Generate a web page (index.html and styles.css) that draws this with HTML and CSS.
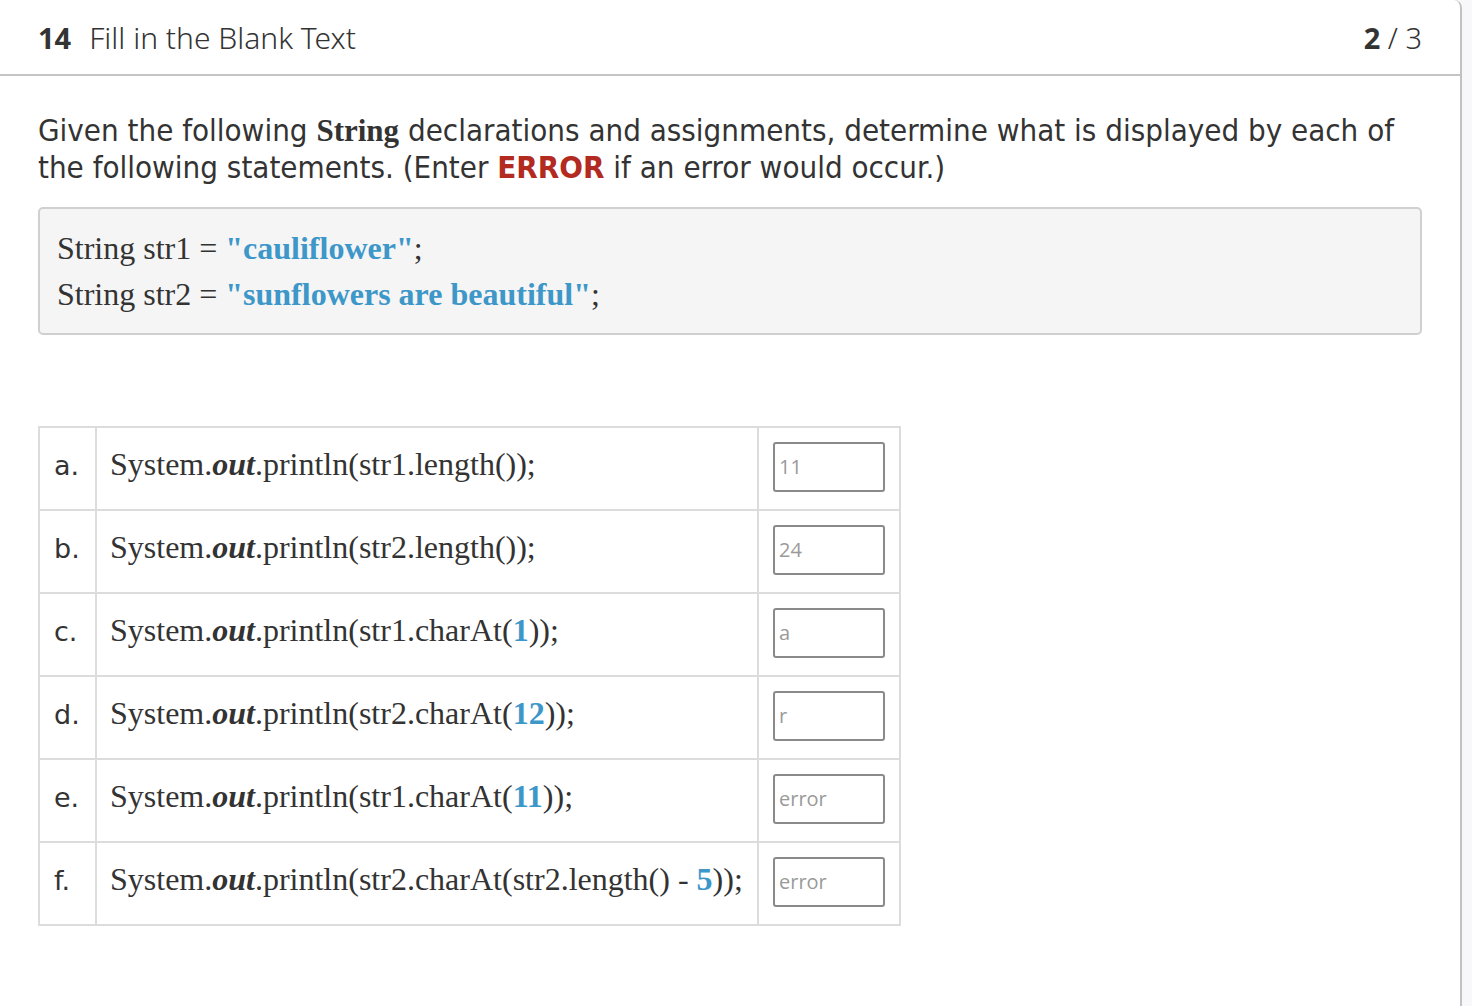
FILE: index.html
```html
<!DOCTYPE html>
<html>
<head>
<meta charset="utf-8">
<link rel="stylesheet" href="styles.css">
</head>
<body>
<div class="page">
  <div class="card">
    <header class="head">
      <div class="title"><span class="num">14</span><span class="name">Fill in the Blank Text</span></div>
      <div class="pager"><b>2</b> / 3</div>
    </header>
    <div class="body">
      <p class="prompt">Given the following <span class="kw">String</span> declarations and assignments, determine what is displayed by each of the following statements. (Enter <span class="err">ERROR</span> if an error would occur.)</p>
      <div class="code">
        <div class="line">String str1 = <span class="lit">"cauliflower"</span>;</div>
        <div class="line">String str2 = <span class="lit">"sunflowers are beautiful"</span>;</div>
      </div>
      <table class="qs">
        <tr><td class="lbl">a.</td><td class="stmt">System.<i>out</i>.println(str1.length());</td><td class="ans"><input class="box" type="text" placeholder="11"></td></tr>
        <tr><td class="lbl">b.</td><td class="stmt">System.<i>out</i>.println(str2.length());</td><td class="ans"><input class="box" type="text" placeholder="24"></td></tr>
        <tr><td class="lbl">c.</td><td class="stmt">System.<i>out</i>.println(str1.charAt(<span class="n">1</span>));</td><td class="ans"><input class="box" type="text" placeholder="a"></td></tr>
        <tr><td class="lbl">d.</td><td class="stmt">System.<i>out</i>.println(str2.charAt(<span class="n">12</span>));</td><td class="ans"><input class="box" type="text" placeholder="r"></td></tr>
        <tr><td class="lbl">e.</td><td class="stmt">System.<i>out</i>.println(str1.charAt(<span class="n">11</span>));</td><td class="ans"><input class="box" type="text" placeholder="error"></td></tr>
        <tr><td class="lbl">f.</td><td class="stmt">System.<i>out</i>.println(str2.charAt(str2.length() - <span class="n">5</span>));</td><td class="ans"><input class="box" type="text" placeholder="error"></td></tr>
      </table>
    </div>
  </div>
</div>
</body>
</html>
```
FILE: styles.css
```css
html, body {
  margin: 0;
  padding: 0;
  background: #f8f8fa;
}
.page {
  width: 1472px;
  height: 1006px;
  overflow: hidden;
}
.card {
  width: 1462px;
  height: 1020px;
  background: #fff;
  border-right: 2px solid #c2c2c2;
  border-top-right-radius: 8px;
  box-sizing: border-box;
}
.head {
  height: 76px;
  box-sizing: border-box;
  border-bottom: 2px solid #c4c4c4;
  display: flex;
  align-items: center;
  justify-content: space-between;
  padding: 0 38px 0 38px;
  font-family: "Noto Sans", sans-serif;
  color: #333;
  font-size: 29px;
}
.title .num {
  font-weight: 700;
  margin-right: 18px;
}
.title .name {
  font-weight: 300;
  font-size: 30px;
}
.pager {
  font-weight: 300;
}
.pager b {
  font-weight: 700;
}
.body {
  padding: 36px 38px 0 38px;
}
.prompt {
  margin: 0;
  font-family: "DejaVu Sans Condensed", "DejaVu Sans", sans-serif;
  font-size: 31px;
  line-height: 36px;
  color: #333;
}
.kw {
  font-family: "Liberation Serif", serif;
  font-weight: 700;
}
.err {
  color: #b22a20;
  font-weight: 700;
}
.code {
  margin-top: 22px;
  width: 1384px;
  height: 128px;
  box-sizing: border-box;
  background: #f5f5f5;
  border: 2px solid #d0d0d0;
  border-radius: 5px;
  padding: 16px 17px;
  font-family: "Liberation Serif", serif;
  font-size: 32px;
  line-height: 46px;
  color: #333;
}
.lit {
  color: #3d97c8;
  font-weight: 700;
}
.qs {
  margin-top: 91px;
  border-collapse: collapse;
  border: 2px solid #dcdcdc;
}
.qs td {
  border: 2px solid #dcdcdc;
  height: 83px;
  padding: 0;
  vertical-align: middle;
}
.lbl {
  width: 57px;
  box-sizing: border-box;
  padding: 0 0 7px 14px !important;
  font-family: "DejaVu Sans", sans-serif;
  font-size: 27px;
  color: #333;
}
.stmt {
  width: 662px;
  box-sizing: border-box;
  padding: 0 8px 8px 13px !important;
  font-family: "Liberation Serif", serif;
  font-size: 32px;
  color: #333;
}
.stmt i {
  font-weight: 700;
}
.n {
  color: #3d97c8;
  font-weight: 700;
}
.ans {
  width: 142px;
  box-sizing: border-box;
  padding: 0 14px 4px 14px !important;
}
.box {
  display: block;
  width: 112px;
  height: 50px;
  box-sizing: border-box;
  border: 2px solid #8a8a8a;
  border-radius: 3px;
  padding: 0 4px;
  font-family: "Open Sans", sans-serif;
  font-size: 20px;
  background: #fff;
}
.box::placeholder {
  color: #9a9a9a;
}
```
